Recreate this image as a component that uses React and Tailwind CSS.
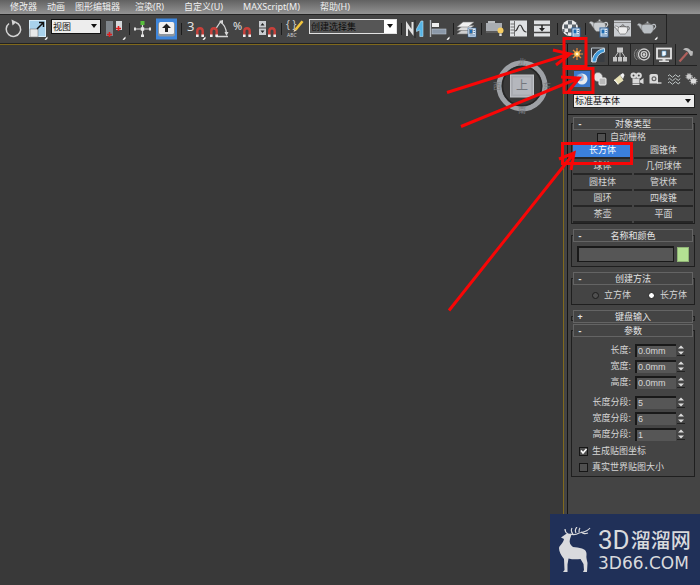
// App.jsx
import React, { useState } from 'react';

const menus = [
  { label: '修改器' },
  { label: '动画' },
  { label: '图形编辑器' },
  { label: '渲染(R)', wide: true },
  { label: '自定义(U)', wide: true },
  { label: 'MAXScript(M)', wide: true },
  { label: '帮助(H)', wide: true }
];

const objectTypes = ['长方体', '圆锥体', '球体', '几何球体', '圆柱体', '管状体', '圆环', '四棱锥', '茶壶', '平面'];

/* ---------- shared icon parts ---------- */

const Flyout = () => <path d="M19.5 22.5l3-3v2l-1.500 1.500z" fill="#fff" />;

const Magnet = ({ x, y }) => (
  <g transform={`translate(${x} ${y})`}>
    <path d="M1.300 9V4a2.700 2.700 0 0 1 5.400 0V9" fill="none" stroke="#c9403a" strokeWidth="2.400" />
    <path d="M0 7.500h2.600V10H0zM5.400 7.500H8V10H5.400z" fill="#eee" />
  </g>
);

const Doc = () => (
  <g>
    <rect x="13" y="11" width="8" height="9" fill="#dfeaf5" stroke="#2c5f96" />
    <rect x="14.500" y="12.500" width="3" height="4" fill="#1d6cb5" />
    <path d="M18.500 13.500h1.500M18.500 15.500h1.500M14.500 18h5.500" stroke="#2c5f96" strokeWidth=".8" />
  </g>
);

const Teapot = ({ fill = '#c9cdd0', stroke = '#777' }) => (
  <g fill={fill} stroke={stroke} strokeWidth=".6">
    <path d="M18 9c3-2 5 1 2.500 3.500-1 1-2 1.500-3.500 2" fill="none" stroke={fill === '#eee' ? '#555' : fill} strokeWidth="1.200" />
    <path d="M8 14C5.500 13 6 9.500 3 9l1.500-1.500C8 7.500 8 10 9 10.500z" />
    <path d="M8 9c3-1.500 8-1.500 11 0 1 3 .5 6.500-2.500 8.500h-6C7.500 15.500 7 12 8 9z" />
    <path d="M10 8.500c1-1.500 6-1.500 7 0z" />
    <circle cx="13.500" cy="6.600" r="1" />
  </g>
);

/* ---------- main toolbar icons ---------- */

const icons = {
  rotate: (
    <g>
      <path d="M8 6.500a7.200 7.200 0 1 0 6.500-1.200" fill="none" stroke="#d4d4d4" strokeWidth="1.500" />
      <path d="M10.500 2.500L15.500 5l-4 3.500z" fill="#d4d4d4" />
    </g>
  ),
  scale: (
    <g>
      <rect x="4" y="3" width="17" height="17" fill="#a9d2ec" />
      <rect x="4.500" y="3.500" width="16" height="16" fill="none" stroke="#d8ecf8" />
      <rect x="5" y="12" width="8" height="8" fill="#e9e9e9" stroke="#777" strokeWidth=".6" />
      <path d="M12 12l6-6M14 5.500h4.500V10" fill="none" stroke="#111" strokeWidth="1.500" />
      <Flyout />
    </g>
  ),
  pivot: (
    <g>
      <rect x="3" y="4" width="7" height="15" fill="#7f858b" />
      <rect x="13" y="4" width="6" height="9" fill="#d5d8db" />
      <path d="M6.500 15v5M4 17.500h5M15.500 9v5M13 11.500h5" stroke="#e01c1c" strokeWidth="1.600" />
      <Flyout />
    </g>
  ),
  manipulate: (
    <g>
      <path d="M11.500 5v14M4 12h15" stroke="#d8d8d8" strokeWidth="1.200" />
      <rect x="9.500" y="4" width="4" height="4" fill="#58c03c" />
      <path d="M10 17.500h3v2.500h-3zM3 10.500h2v3H3zM18 10.500h2v3h-2zM9.800 10.300h3.400v3.400H9.800z" fill="#e5e5e5" />
    </g>
  ),
  keyboard: (
    <g>
      <rect x="1" y="1.500" width="21" height="21" fill="#3f87dd" />
      <rect x="3" y="5.500" width="17" height="14" rx="2" fill="#8e969e" />
      <rect x="4" y="5" width="15" height="12" rx="1.500" fill="#f1f1f1" />
      <path d="M11.500 6.500l4.500 4.500h-3v4h-3v-4H7z" fill="#222" />
    </g>
  ),
  snap: (
    <g>
      <text x="4" y="14" fontSize="13" fill="#e2e2e2">3</text>
      <Magnet x={13} y={10} />
      <Flyout />
    </g>
  ),
  angle: (
    <g>
      <path d="M9 19.500h12M8 13l6-9M13 5q6 3 6.500 12" fill="none" stroke="#d8d8d8" strokeWidth="1.300" />
      <path d="M12 4l4-1 0 4zM17.500 15h4l-2 4z" fill="#d8d8d8" />
      <Magnet x={3} y={10} />
    </g>
  ),
  percent: (
    <g>
      <text x="2" y="12.500" fontSize="11" fill="#e2e2e2">%</text>
      <Magnet x={12} y={10} />
    </g>
  ),
  spinner: (
    <g>
      <rect x="4" y="4" width="7" height="6.500" fill="#c9ccd0" />
      <rect x="4" y="11.500" width="7" height="6.500" fill="#c9ccd0" />
      <path d="M5.500 8.500L7.500 6l2 2.500zM5.500 13.500l2 2.500 2-2.500z" fill="#222" />
      <Magnet x={13} y={10} />
    </g>
  ),
  named: (
    <g>
      <text x="3" y="11" fontSize="10" fill="#d0d0d0">{'{ }'}</text>
      <path d="M11.500 12l7-8.500 2 1.500-7 8.500z" fill="#f2c53d" />
      <path d="M11.500 12l2 1.500-3 1.500z" fill="#f0dcc0" />
      <text x="4" y="20" fontSize="5" fill="#d0d0d0">ABC</text>
    </g>
  ),
  mirror: (
    <g>
      <path d="M3 19V4l5.500 8V5h2v14L5 11.500V19z" fill="#e2e2e2" />
      <path d="M12 3v18" stroke="#222" />
      <path d="M20 19.500h-3.200V13L13.500 14.500V12l4.500-8h2z" fill="#55b4e6" stroke="#bfe2f5" strokeWidth=".6" />
    </g>
  ),
  align: (
    <g>
      <path d="M3.500 3v17" stroke="#b5bac0" strokeWidth="1.400" />
      <rect x="5" y="6" width="7" height="4" fill="#eee" />
      <rect x="5" y="12" width="14" height="5" fill="#8b98a8" stroke="#b9c2cd" strokeWidth=".6" />
      <Flyout />
    </g>
  ),
  layers: (
    <g stroke="#777" strokeWidth=".6">
      <path d="M2 17l6-5h11l-6 5z" fill="#cfcfcf" />
      <path d="M2 13.500l6-5h11l-6 5z" fill="#dcdcdc" />
      <path d="M2 10l6-5h11l-6 5z" fill="#f0f0f0" />
      <Doc />
    </g>
  ),
  ribbon: (
    <g>
      <rect x="5" y="4" width="7" height="3" fill="#b9bcbf" />
      <rect x="3" y="6" width="16" height="8" fill="#a9adb2" />
      <path d="M3 15h12" stroke="#777" />
      <circle cx="17.500" cy="13.500" r="3" fill="#f6cd62" />
      <path d="M16.300 16.500h2.400V19h-2.400z" fill="#ddd" />
    </g>
  ),
  curve: (
    <g>
      <rect x="3" y="3.500" width="17" height="16" fill="#dfe1e3" />
      <path d="M7.500 4v15M3.500 7h4M3.500 10h4M3.500 13h4M3.500 16h4" stroke="#555" strokeWidth=".8" />
      <path d="M8 14c3 0 2.500-6 5-6s2 7 6.500 7" fill="none" stroke="#333" strokeWidth="1.200" />
    </g>
  ),
  schematic: (
    <g>
      <rect x="3" y="3.500" width="16" height="16" fill="#dfe1e3" />
      <path d="M3 8h16M3 15.500h16" stroke="#444" strokeWidth="1.500" />
      <path d="M11 8v5" stroke="#222" strokeWidth="1.500" />
      <path d="M8 11h6l-3 3.500z" fill="#222" />
    </g>
  ),
  material: (
    <g>
      <circle cx="11" cy="11" r="8" fill="#ececec" />
      <path d="M9 3.500h4v4H9zM5 7.500h4v4H5zM13 7.500h4v4h-4zM9 11.500h4v4H9zM3.500 12h2v3h-2zM6 15h3v3zM17 4.500l2 3h-2z" fill="#5d646b" />
      <Doc />
    </g>
  ),
  renderSetup: (
    <g>
      <g transform="translate(-1 -3)"><Teapot /></g>
      <Doc />
    </g>
  ),
  frame: (
    <g>
      <rect x="3" y="3.500" width="17" height="16" fill="#c9ccd0" />
      <path d="M3 5.500h17" stroke="#888" />
      <g transform="translate(1 3) scale(.8)"><Teapot fill="#eee" stroke="#333" /></g>
    </g>
  ),
  render: (
    <g>
      <g transform="translate(-1 -1)"><Teapot fill="#b9bec3" /></g>
      <Flyout />
    </g>
  )
};

const ToolButton = ({ icon, title }) => (
  <button aria-label={title} className="w-6 h-6 shrink-0">
    <svg viewBox="0 0 24 24" className="w-6 h-6">{icons[icon]}</svg>
  </button>
);

const Separator = () => (
  <div className="w-1 shrink-0 flex justify-center">
    <span className="w-px h-3 bg-[#1c1c1c]" />
  </div>
);

const Arrow = () => (
  <svg viewBox="0 0 6 4" className="w-[6px] h-1 absolute right-1 top-1/2 -mt-[2px] pointer-events-none">
    <path d="M0 0h6L3 4z" fill="#111" />
  </svg>
);

/* ---------- command panel tabs ---------- */

const tabs = [
  {
    name: '创建',
    art: (
      <g>
        <path d="M10 4v12M4 10h12M6 6l8 8M14 6l-8 8" stroke="#e88a3a" strokeWidth="1.200" />
        <circle cx="10" cy="10" r="2.800" fill="#ffc455" />
        <circle cx="10" cy="10" r="1.300" fill="#fff8dc" />
      </g>
    )
  },
  {
    name: '修改',
    art: (
      <g>
        <rect x="3.500" y="4" width="13" height="14" fill="#393d42" />
        <path d="M3.500 18V4h13" fill="none" stroke="#b9c4cc" />
        <path d="M4 18C4.500 11 9 5.500 16.500 4.500V8C11.500 9 8.500 12.500 8 18z" fill="#3d97d6" stroke="#dcebf5" strokeWidth=".9" />
      </g>
    )
  },
  {
    name: '层次',
    art: (
      <g fill="#c6c6c6">
        <path d="M7 3.500h6v5H7zM3 13h4v4.500H3zM8 13h4v4.500H8zM13 13h4v4.500h-4z" />
        <path d="M10 7v6M5 13l3-4.500M15 13l-3-4.500" fill="none" stroke="#c6c6c6" />
      </g>
    )
  },
  {
    name: '运动',
    art: (
      <g fill="none" stroke="#d0d0d0">
        <path d="M5 5a7 7 0 0 0 0 11M7.500 5.500a6 6 0 0 0 0 10" stroke="#858585" />
        <circle cx="12" cy="10.500" r="5.500" strokeWidth="1.300" />
        <circle cx="12" cy="10.500" r="2.800" strokeWidth="1.300" />
        <circle cx="12" cy="10.500" r="1" fill="#eee" />
      </g>
    )
  },
  {
    name: '显示',
    art: (
      <g>
        <rect x="3" y="4.500" width="14" height="10" fill="#555" stroke="#e4e4e4" strokeWidth="1.800" />
        <path d="M8 7h4v3.500L10.500 12H8z" fill="#f4f8fc" stroke="#4d9ad3" strokeWidth=".6" />
        <path d="M8.500 15h3v1.500H15V18H5v-1.500h3.500z" fill="#dcdcdc" />
      </g>
    )
  },
  {
    name: '工具',
    art: (
      <g>
        <path d="M3.500 17.500l8-9" stroke="#b0605c" strokeWidth="2.200" />
        <path d="M7 5.500c3-2.500 6-1.500 7.500 1l2.500 1-.5 4-2 .5-2.500-4C10.500 6.500 9 6 7 5.500z" fill="#b9b9b9" />
      </g>
    )
  }
];

const categories = [
  {
    name: '几何体',
    art: (
      <g>
        <circle cx="8" cy="8" r="5.500" fill="#e9ecef" />
        <circle cx="6" cy="6.500" r="3.800" fill="#6f9edb" opacity=".7" />
      </g>
    )
  },
  {
    name: '图形',
    art: (
      <g stroke="#777" strokeWidth=".6">
        <circle cx="6" cy="6" r="4.500" fill="#e2e2e2" />
        <rect x="7" y="7" width="7" height="7" rx="1" fill="#b9b9b9" stroke="#f0f0f0" strokeWidth="1" />
      </g>
    )
  },
  {
    name: '灯光',
    art: (
      <g>
        <path d="M3 9l6-5 3.500 5.500-5.500 4z" fill="#e6e0b4" />
        <path d="M9 4l3-2 1.500 2L12 8z" fill="#f4f4f4" />
        <path d="M3 9q2 .5 4 4.500" fill="none" stroke="#fff" />
      </g>
    )
  },
  {
    name: '摄影机',
    art: (
      <g fill="#d9d9d9">
        <circle cx="4.500" cy="4.500" r="3" />
        <circle cx="9.800" cy="4.500" r="3" />
        <rect x="3.500" y="7.500" width="7" height="4.500" />
        <path d="M11 9.500l3.500-2.500v6L11 11.500zM3.500 12.500h7V14h-7z" />
        <circle cx="4.500" cy="4.500" r="1" fill="#444" />
        <circle cx="9.800" cy="4.500" r="1" fill="#444" />
      </g>
    )
  },
  {
    name: '辅助对象',
    art: (
      <g>
        <path d="M2.500 4.500q0-1.500 2-1.500H9q2 0 2 2v7.500H2.500z" fill="#dadada" />
        <circle cx="7" cy="7.800" r="2.500" fill="#666" />
        <circle cx="7" cy="7.800" r="1.200" fill="#ddd" />
        <path d="M10 12h4.500" stroke="#ddd" strokeWidth="1.300" />
      </g>
    )
  },
  {
    name: '空间扭曲',
    art: (
      <path
        d="M2 5q1.500-2.500 3 0t3 0 3 0 3-1M2 8.500q1.500-2.500 3 0t3 0 3 0 3-1M2 12q1.500-2.500 3 0t3 0 3 0 3-1"
        fill="none"
        stroke="#bfc6c6"
      />
    )
  },
  {
    name: '系统',
    art: (
      <g>
        <circle cx="5" cy="5.500" r="2.500" fill="#ccc" />
        <circle cx="5" cy="5.500" r="3" fill="none" stroke="#ccc" strokeDasharray="1.200 1.200" />
        <circle cx="9.500" cy="10" r="2.800" fill="#ddd" />
        <circle cx="9.500" cy="10" r="3.500" fill="none" stroke="#ddd" strokeDasharray="1.200 1.200" />
      </g>
    )
  }
];

/* ---------- rollouts ---------- */

const Rollout = ({ title, open = true, children }) => (
  <section className="relative">
    <div className={`absolute inset-x-0 top-[6px] border border-[#1f1f1f] ${open ? 'bottom-0' : 'bottom-[2px]'}`} />
    <button className="relative mx-[2px] w-[calc(100%-4px)] h-[13px] flex items-center bg-[#444] border border-[#646464] text-[#e4e4e4]">
      <span className="w-3 leading-[11px] font-bold">{open ? '-' : '+'}</span>
      <span className="flex-1 pr-3 text-center leading-[11px]">{title}</span>
    </button>
    {open && <div className="relative">{children}</div>}
  </section>
);

const NumberRow = ({ id, label, value }) => (
  <div className="flex items-center h-4">
    <label htmlFor={id} className="flex-1 text-right pr-1">{label}:</label>
    <input
      id={id}
      defaultValue={value}
      className="w-[41px] h-[13px] px-px bg-[#565656] border-t-2 border-l-2 border-[#191919] text-[9px] leading-[10px] font-['Liberation_Sans',sans-serif]"
    />
    <div className="ml-px mr-[10px] w-2 flex flex-col">
      <button aria-label={`${label} +`} className="h-[6px] flex items-center justify-center">
        <svg viewBox="0 0 6 4" className="w-[6px] h-1"><path d="M0 3.500L3 .5l3 3z" fill="#ddd" /></svg>
      </button>
      <button aria-label={`${label} -`} className="h-[6px] flex items-center justify-center border-b border-[#222]">
        <svg viewBox="0 0 6 4" className="w-[6px] h-1"><path d="M0 .5h6l-3 3z" fill="#ddd" /></svg>
      </button>
    </div>
  </div>
);

const Check = ({ label, checked, onChange }) => (
  <label className="flex items-center gap-1">
    <span className="relative w-[9px] h-[9px]">
      <input
        type="checkbox"
        checked={checked}
        onChange={onChange}
        className="block appearance-none w-[9px] h-[9px] bg-[#505050] border border-[#161616]"
      />
      {checked && (
        <svg viewBox="0 0 9 9" className="absolute inset-0 pointer-events-none">
          <path d="M2 3.500l2 2.500 3.500-4" fill="none" stroke="#fff" strokeWidth="1.600" />
        </svg>
      )}
    </span>
    {label}
  </label>
);

const CommandPanel = () => {
  const [type, setType] = useState('长方体');
  const [method, setMethod] = useState('长方体');
  const [opts, setOpts] = useState({ grid: false, uv: true, real: false });
  const toggle = (key) => setOpts({ ...opts, [key]: !opts[key] });

  return (
    <aside className="w-[133px] shrink-0 ml-[3px] pr-[3px] border-l border-[#151515] flex flex-col">
      {/* Tabs */}
      <div className="flex h-[22px]">
        {tabs.map((tab, i) => (
          <button
            key={tab.name}
            aria-label={tab.name}
            className={`flex justify-center ${i === 0 ? 'w-[18px] shrink-0' : 'flex-1 border-l border-b border-[#222]'}`}
          >
            <svg viewBox="0 0 20 20" className="w-5 h-5 shrink-0">{tab.art}</svg>
          </button>
        ))}
      </div>

      {/* Categories */}
      <div className="flex justify-between mt-[5px] pl-[6px] -mr-[3px]">
        {categories.map((cat, i) => (
          <button key={cat.name} aria-label={cat.name} className={`w-4 h-4 ${i === 0 ? 'bg-[#3b78cc]' : ''}`}>
            <svg viewBox="0 0 16 16" className="w-4 h-4">{cat.art}</svg>
          </button>
        ))}
      </div>

      <div className="relative mt-[7px] ml-[5px] mr-[2px]">
        <select
          aria-label="对象类别"
          className="block appearance-none w-full h-[14px] px-px bg-[#ececec] border border-[#222] text-[#111] leading-[12px]"
        >
          <option>标准基本体</option>
        </select>
        <Arrow />
      </div>

      <div className="mt-[6px] border-t border-[#151515] flex-1 pl-[3px] pr-[2px] pt-[2px]">
        <Rollout title="对象类型">
          <div className="h-3 mt-px pl-[26px] flex items-center">
            <Check label="自动栅格" checked={opts.grid} onChange={() => toggle('grid')} />
          </div>
          <div className="grid grid-cols-2 gap-x-[2px] mx-[2px] pb-px">
            {objectTypes.map((name) => (
              <button
                key={name}
                onClick={() => setType(name)}
                className={`h-4 leading-[14px] border-b-2 border-[#262626] ${type === name ? 'bg-[#3b80dc] text-white' : ''}`}
              >
                {name}
              </button>
            ))}
          </div>
        </Rollout>

        <div className="mt-[5px]">
          <Rollout title="名称和颜色">
            <div className="flex items-center gap-[3px] px-[6px] pt-1 pb-[5px]">
              <input
                aria-label="名称"
                className="flex-1 min-w-0 h-4 bg-[#565656] border-t-2 border-l-2 border-r border-b border-[#191919]"
              />
              <button aria-label="颜色" className="w-3 h-[15px] bg-[#b4e193] border border-[#8fb475]" />
            </div>
          </Rollout>
        </div>

        <div className="mt-[5px]">
          <Rollout title="创建方法">
            <div className="flex items-center gap-4 pl-5 h-5">
              {['立方体', '长方体'].map((name) => (
                <label key={name} className="flex items-center gap-1">
                  <span className="w-[9px] h-[9px] flex items-center justify-center">
                    <input
                      type="radio"
                      name="method"
                      checked={method === name}
                      onChange={() => setMethod(name)}
                      className="appearance-none w-[7px] h-[7px] rounded-full border border-[#1d1d1d] bg-[#505050] checked:bg-white"
                    />
                  </span>
                  {name}
                </label>
              ))}
            </div>
          </Rollout>
        </div>

        <div className="mt-[5px]">
          <Rollout title="键盘输入" open={false} />
        </div>

        <div className="mt-px">
          <Rollout title="参数">
            <div className="pt-[5px]">
              <NumberRow id="len" label="长度" value="0.0mm" />
              <NumberRow id="wid" label="宽度" value="0.0mm" />
              <NumberRow id="hei" label="高度" value="0.0mm" />
            </div>
            <div className="pt-1">
              <NumberRow id="lenSeg" label="长度分段" value="5" />
              <NumberRow id="widSeg" label="宽度分段" value="6" />
              <NumberRow id="heiSeg" label="高度分段" value="1" />
            </div>
            <div className="flex flex-col gap-1 pl-2 pt-[3px] pb-1">
              <Check label="生成贴图坐标" checked={opts.uv} onChange={() => toggle('uv')} />
              <Check label="真实世界贴图大小" checked={opts.real} onChange={() => toggle('real')} />
            </div>
          </Rollout>
        </div>
      </div>
    </aside>
  );
};

const ViewCube = () => (
  <svg viewBox="0 0 60 60" className="absolute right-[11px] top-[11px] w-[60px] h-[60px]">
    <circle cx="30" cy="30" r="23" fill="none" stroke="#9ea1a6" strokeWidth="5" />
    <circle cx="30" cy="30" r="19.500" fill="none" stroke="#262626" strokeWidth="1.500" />
    <g fontSize="8" fill="#777b80" textAnchor="middle">
      <text x="30" y="9">北</text>
      <text x="30" y="57">南</text>
      <text x="5" y="33">西</text>
      <text x="55" y="33">东</text>
    </g>
    <rect x="18.500" y="19" width="23" height="22" fill="#a9abb1" stroke="#c3c5ca" />
    <rect x="21" y="21.500" width="18" height="17" fill="#b5b7bd" />
    <text x="30" y="34" fontSize="12" fill="#74777e" textAnchor="middle">上</text>
  </svg>
);

/* red boxes and arrows drawn over the panel */
const Annotations = () => (
  <svg viewBox="0 0 260 320" className="absolute right-0 top-0 w-[260px] h-[320px] pointer-events-none">
    <g fill="none" stroke="#f80606" strokeWidth="3">
      <rect x="124" y="38.500" width="22" height="28" />
      <rect x="124" y="68.500" width="29" height="24" />
      <rect x="122.500" y="143.500" width="69" height="20" />
      <path d="M7 92.500L129 54M113 50l17 4-14 11" />
      <path d="M21 126.500L139 78M121 77l18 1-11 14" />
      <path d="M9 310.500L134 153M119 159l15-6-3 17" />
    </g>
  </svg>
);

const Watermark = () => (
  <div className="absolute right-0 bottom-0 w-[150px] h-[71px] pl-2 flex items-center gap-[6px] bg-[#203058] text-[#d9dadd]">
    <svg viewBox="0 0 34 46" className="w-[34px] h-[46px] shrink-0">
      <path
        d="M3 10.500L8 7l3-.5 2.500 1L12 12c-1 3 0 6 3 8 3 .5 6 .5 9 1.500 3 1 5 3 4.500 6.500-.5 3 .5 5 1 8l-.5 9h-4l1-2-.5-6-3-5c-4 .5-8 .5-12-.5l-1 6v7.500H5l1.500-2L6 32C3 28 1 25 1 21c.5-3 4-4 5-9z"
        fill="#d9dadd"
      />
      <path
        d="M10 7C8 6 7 5 7 2M12 7c3 1 6 1 9-1 4-1 8-1 11-5M15 7c-2-2-2-4-1-6M18 6c-1-2-1-4 1-6M21 5c0-2 0-3 1-4M23 5c3 2 4 2 7 1"
        fill="none"
        stroke="#d9dadd"
        strokeWidth="1.200"
      />
    </svg>
    <div className="whitespace-nowrap">
      <div className="flex items-center h-6 leading-6">
        <span className="text-[26px] font-['Roboto',sans-serif]">3D</span>
        <span className="ml-px text-[20px] font-medium font-['Noto_Sans_CJK_SC',sans-serif]">溜溜网</span>
      </div>
      <div className="mt-[3px] text-[17px] leading-4 font-['DejaVu_Sans',sans-serif]">3D66.COM</div>
    </div>
  </div>
);

const App = () => {
  return (
    <div className="relative min-h-screen flex flex-col bg-[#444] text-[#d6d6d6] text-[9px] leading-3 overflow-hidden font-['Noto_Sans','Noto_Sans_CJK_SC',sans-serif]">
      {/* Menu bar */}
      <nav className="h-[14px] pl-[5px] flex items-center bg-linear-to-b from-[#626262] to-[#939393] text-[#f0f0f0]">
        {menus.map((menu) => (
          <button key={menu.label} className={`whitespace-nowrap ${menu.wide ? 'px-[10px]' : 'px-[5px]'}`}>
            {menu.label}
          </button>
        ))}
      </nav>

      {/* Main toolbar */}
      <div className="h-[30px] mr-[33px] pl-px flex items-center border-t border-r border-b border-[#222]">
        <ToolButton icon="rotate" title="旋转" />
        <ToolButton icon="scale" title="缩放" />
        <div className="relative w-[50px] shrink-0 mx-[2px] mb-[6px]">
          <select aria-label="坐标系" className="block appearance-none w-full h-[15px] px-px bg-[#ededed] border border-[#111] text-[#111] leading-[13px]">
            <option>视图</option>
          </select>
          <Arrow />
        </div>
        <ToolButton icon="pivot" title="轴点中心" />
        <Separator />
        <ToolButton icon="manipulate" title="操纵" />
        <ToolButton icon="keyboard" title="快捷键覆盖" />
        <Separator />
        <ToolButton icon="snap" title="捕捉" />
        <ToolButton icon="angle" title="角度捕捉" />
        <ToolButton icon="percent" title="百分比捕捉" />
        <ToolButton icon="spinner" title="微调器捕捉" />
        <Separator />
        <ToolButton icon="named" title="命名选择集" />
        <div className="relative w-[88px] shrink-0 mx-[2px] mb-[6px]">
          <select aria-label="选择集" className="block appearance-none w-full h-[15px] px-px bg-[#565656] border border-[#e2e2e2] text-[#0c0c0c] leading-[13px]">
            <option>创建选择集</option>
          </select>
          <span className="absolute right-px top-px w-3 h-[13px] bg-white pointer-events-none" />
          <Arrow />
        </div>
        <Separator />
        <ToolButton icon="mirror" title="镜像" />
        <ToolButton icon="align" title="对齐" />
        <Separator />
        <ToolButton icon="layers" title="层管理器" />
        <Separator />
        <ToolButton icon="ribbon" title="石墨工具" />
        <ToolButton icon="curve" title="曲线编辑器" />
        <ToolButton icon="schematic" title="图解视图" />
        <Separator />
        <ToolButton icon="material" title="材质编辑器" />
        <Separator />
        <ToolButton icon="renderSetup" title="渲染设置" />
        <ToolButton icon="frame" title="渲染帧窗口" />
        <ToolButton icon="render" title="渲染产品" />
      </div>

      <div className="flex-1 flex">
        {/* Viewport */}
        <main className="relative flex-1 bg-[#393939] border-t border-r border-[#80691c]">
          <ViewCube />
        </main>
        <CommandPanel />
      </div>

      <Annotations />
      <Watermark />
    </div>
  );
};

export default App;
